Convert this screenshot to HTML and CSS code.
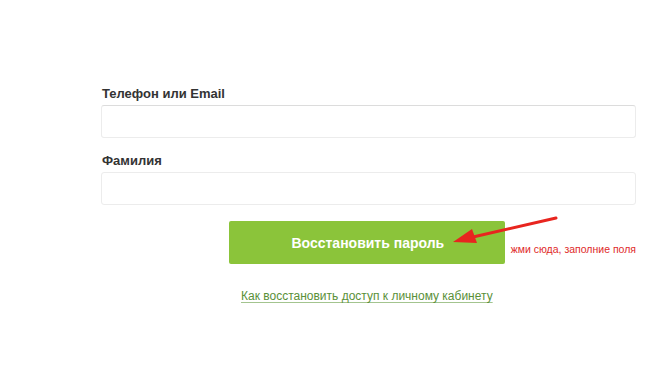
FILE: index.html
```html
<!DOCTYPE html>
<html lang="ru">
<head>
<meta charset="utf-8">
<link rel="stylesheet" href="styles.css">
</head>
<body>
<form class="form">
  <label class="label">Телефон или Email</label>
  <div class="input input-first"></div>
  <label class="label label-second">Фамилия</label>
  <div class="input input-second"></div>
  <div class="action-row">
    <button type="button" class="btn">Восстановить пароль</button>
    <span class="note">жми сюда, заполние поля</span>
    <svg class="arrow" width="110" height="34" viewBox="0 0 110 34">
      <path d="M105 2 L22 21" stroke="#e8251f" stroke-width="3" stroke-linecap="round" fill="none"/>
      <path d="M2 26 L21 13 L26 27 Z" fill="#e8251f"/>
    </svg>
  </div>
  <div class="link-row">
    <a class="link" href="#">Как восстановить доступ к личному кабинету</a>
  </div>
</form>
</body>
</html>
```
FILE: styles.css
```css
html, body {
  margin: 0;
  padding: 0;
  background: #fff;
}
body {
  font-family: "Liberation Sans", Arial, sans-serif;
  width: 646px;
  height: 366px;
  overflow: hidden;
}
.form {
  display: flex;
  flex-direction: column;
  margin-left: 101px;
  width: 535px;
  padding-top: 85px;
}
.label {
  font-size: 13px;
  font-weight: bold;
  color: #333;
  line-height: 17px;
  padding-left: 1px;
}
.label-second {
  margin-top: 14px;
}
.input {
  box-sizing: border-box;
  border: 1px solid #ececec;
  border-top-color: #dcdcdc;
  border-radius: 3px;
  background: #fff;
  margin-top: 3px;
}
.input-first { height: 33px; }
.input-second { height: 33px; border-top-color: #ececec; }
.action-row {
  position: relative;
  display: flex;
  align-items: flex-end;
  margin-top: 16px;
  margin-left: 128px;
}
.btn {
  width: 279px;
  height: 43px;
  border: none;
  border-radius: 2px;
  background: #8bc43a;
  color: #fff;
  font-family: "Liberation Sans", Arial, sans-serif;
  font-size: 14px;
  font-weight: bold;
  padding: 0;
  padding-top: 1px;
  padding-left: 2px;
}
.note {
  font-size: 10.5px;
  color: #e02a2a;
  margin-left: 6px;
  margin-bottom: 9px;
  white-space: nowrap;
}
.arrow {
  position: absolute;
  left: 222px;
  top: -5px;
}
.link-row {
  display: flex;
  margin-top: 25px;
  margin-left: 140px;
}
.link {
  font-size: 12px;
  color: #5a9038;
  text-decoration: underline;
  text-decoration-color: #a3c48f;
  text-underline-offset: 2px;
}
```
